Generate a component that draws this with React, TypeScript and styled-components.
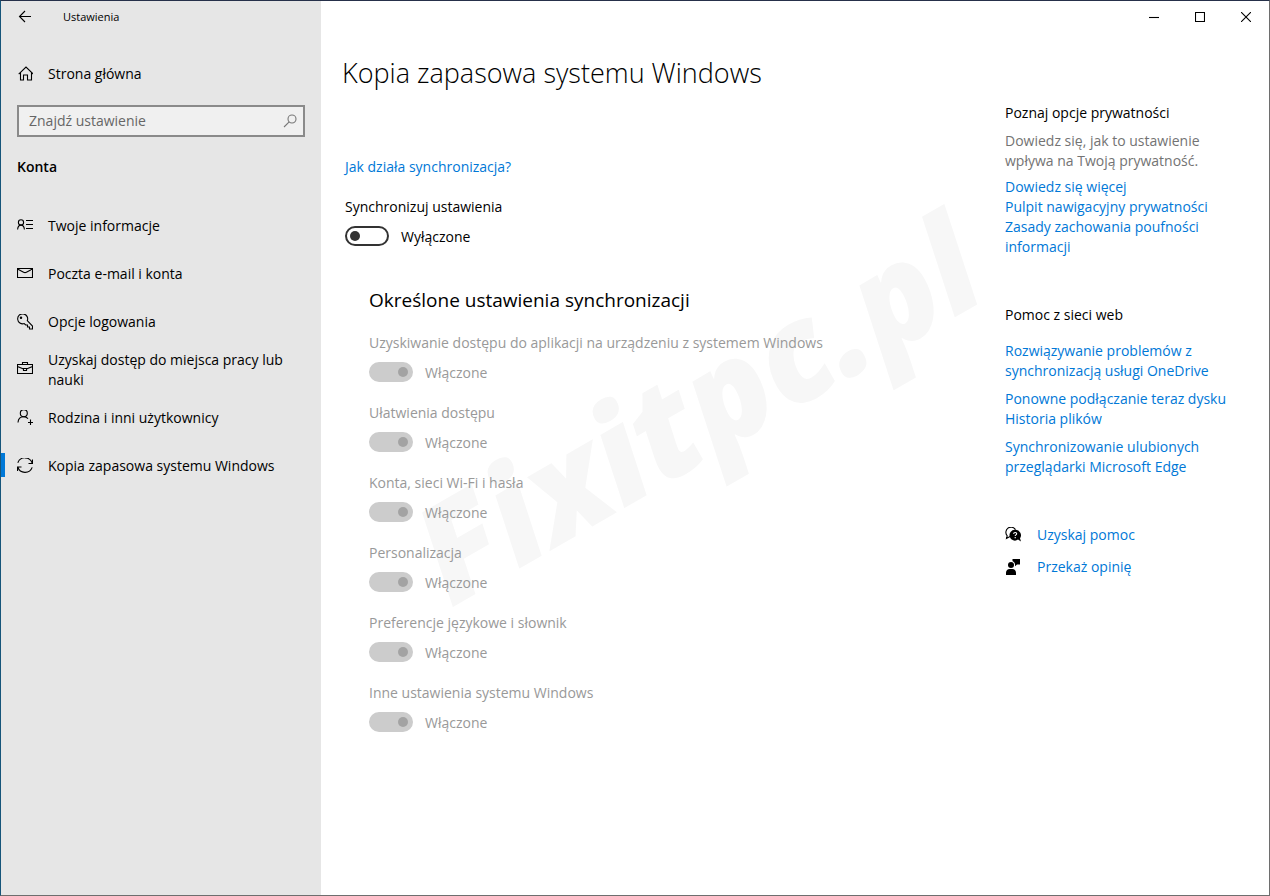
import React from "react";
import styled, { createGlobalStyle } from "styled-components";

const GlobalStyle = createGlobalStyle`
  * { box-sizing: border-box; }
  body {
    margin: 0;
    font-family: "Open Sans", "Noto Sans", sans-serif;
    font-size: 14px;
    line-height: 20px;
    color: #000;
    background: #fff;
  }
  button, input { font: inherit; color: inherit; }
`;

const AppWindow = styled.div`
  display: flex;
  min-height: 100vh;
  border: 1px solid;
  border-color: #26304a #6e6e6e #6e6e6e #16557a;
  overflow: hidden;
`;

const Sidebar = styled.aside`
  flex: 0 0 320px;
  background: #e6e6e6;
`;

const TitleBar = styled.header<{ $end?: boolean }>`
  display: flex;
  align-items: center;
  justify-content: ${(p) => (p.$end ? "flex-end" : "flex-start")};
  height: 32px;
  font-size: 11px;
`;

const BackButton = styled.button`
  display: flex;
  align-items: center;
  width: 48px;
  height: 32px;
  margin-right: 14px;
  padding: 0 0 0 16px;
  border: 0;
  background: none;
`;

const CaptionButton = styled.button`
  display: flex;
  align-items: center;
  justify-content: center;
  width: 46px;
  height: 32px;
  padding: 0;
  border: 0;
  background: none;
`;

const NavLink = styled.a<{ $active?: boolean }>`
  display: flex;
  align-items: center;
  gap: 15px;
  min-height: 48px;
  padding: 0 16px 0 12px;
  border-left: 4px solid transparent;
  color: #000;
  text-decoration: none;
  position: relative;

  &::before {
    content: "";
    display: ${(p) => (p.$active ? "block" : "none")};
    position: absolute;
    left: -4px;
    top: 11px;
    width: 4px;
    height: 24px;
    background: #0078d7;
  }
`;

const HomeLink = styled(NavLink)`
  height: 50px;
  margin-top: 16px;
`;

const SearchBox = styled.label`
  display: flex;
  align-items: center;
  height: 32px;
  margin: 6px 16px 20px;
  padding: 0 5px 0 10px;
  border: 2px solid #8a8a8a;
  background: #f0f0f0;
`;

const SearchInput = styled.input`
  flex: 1;
  min-width: 0;
  padding: 0;
  border: 0;
  outline: 0;
  background: none;

  &::placeholder { color: #666; opacity: 1; }
`;

const Category = styled.h2`
  margin: 0 16px 25px;
  font-size: 14px;
  line-height: 20px;
  font-weight: 600;
`;

const Main = styled.main`
  flex: 1;
  min-width: 0;
  position: relative;
`;

const Watermark = styled.div`
  position: absolute;
  left: 104px;
  top: 562px;
  height: 0;
  line-height: 0;
  font-size: 136px;
  font-weight: 800;
  font-style: italic;
  color: #f7f7f7;
  white-space: nowrap;
  transform: rotate(-30deg);
  transform-origin: 0 0;
  pointer-events: none;
`;

const Body = styled.div`
  display: flex;
  position: relative;
  padding: 22px 24px 24px;
`;

const Content = styled.section`
  flex: 1;
  min-width: 0;
`;

const PageTitle = styled.h1`
  margin: 0 0 66px -3px;
  font-size: 27px;
  line-height: 36px;
  font-weight: 300;
`;

const Link = styled.a`
  display: block;
  color: #0078d7;
  text-decoration: none;
`;

const Setting = styled.label`
  display: block;
  margin-top: 20px;
`;

const SettingRow = styled.span<{ $disabled?: boolean }>`
  display: block;
  color: ${(p) => (p.$disabled ? "#999" : "#000")};
`;

const SwitchLine = styled.span`
  display: flex;
  align-items: flex-start;
  gap: 12px;
  height: 21px;
  margin-top: 9px;
  line-height: 22px;
`;

const Switch = styled.input`
  appearance: none;
  display: flex;
  align-items: center;
  width: 44px;
  height: 20px;
  margin: 0;
  padding: 0 3px;
  border: 2px solid #333;
  border-radius: 10px;
  background: #fff;

  &::before {
    content: "";
    width: 10px;
    height: 10px;
    border-radius: 50%;
    background: #333;
  }
  &:checked { justify-content: flex-end; }
  &:disabled { border-color: #ccc; background: #ccc; }
  &:disabled::before { background: #a3a3a3; }
`;

const SyncGroup = styled.section`
  margin: 39px 0 0 24px;
`;

const GroupTitle = styled.h2`
  margin: 0 0 19px;
  font-size: 19px;
  line-height: 28px;
  font-weight: 400;
`;

const GroupList = styled.div`
  display: grid;
  gap: 20px;

  ${Setting} { margin-top: 0; }
`;

const Related = styled.aside`
  flex: 0 0 240px;
  padding-top: 48px;
`;

const RelatedTitle = styled.h3`
  margin: 0;
  font-size: 14px;
  line-height: 20px;
  font-weight: 400;
`;

const Note = styled.p`
  margin: 8px 0 6px;
  color: #737373;
`;

const LinkStack = styled.div<{ $gap?: number }>`
  display: grid;
  gap: ${(p) => p.$gap ?? 0}px;
  padding-right: 16px;
`;

const HelpSection = styled.section`
  margin: 48px 0 42px;

  ${RelatedTitle} { margin-bottom: 16px; }
  ${LinkStack} { padding-right: 0; }
`;

const ActionLink = styled(Link)`
  display: flex;
  align-items: center;
  gap: 16px;
  height: 32px;

  svg { color: #000; }
`;

const IconSvg = styled.svg`
  flex-shrink: 0;
`;

const Svg = ({ children, size = 16 }: { children: React.ReactNode; size?: number }) => (
  <IconSvg
    width={size}
    height={size}
    viewBox={`0 0 ${size} ${size}`}
    fill="none"
    stroke="currentColor"
    strokeWidth="1.1"
    aria-hidden="true"
  >
    {children}
  </IconSvg>
);

const BackIcon = () => <Svg><path d="M14 7.5H2.5M8 2L2.5 7.5L8 13" /></Svg>;
const HomeIcon = () => (
  <Svg><path d="M1.7 8.6L9 1.5l7.3 7.1M3.5 7v7.5h3V9.5h4v5h4V7" transform="translate(0 -.5)" /></Svg>
);
const SearchIcon = () => (
  <Svg><g stroke="#777"><circle cx="10" cy="6" r="4" /><path d="M7.2 8.8L2 14" /></g></Svg>
);
const InfoIcon = () => (
  <Svg><circle cx="4" cy="4.4" r="2.6" /><path d="M.6 11.5C.8 8.6 2.2 7.1 4 7.1s3.2 1.5 3.4 4.4M9 2.5h7M9 6.5h7M9 10.5h7" /></Svg>
);
const MailIcon = () => (
  <Svg><path d="M.5 2.5h15v9H.5zM.5 3L6.6 6.3a3 3 0 0 0 2.8 0L15.5 3" /></Svg>
);
const KeyIcon = () => (
  <Svg>
    <path d="M10.3 7.2A5 5 0 1 0 7.2 10.1L8.7 11.5H10.5V13.5H12.5V15.5H15.5V12.6L10.3 7.2Z" transform="translate(0 -.5)" />
    <circle cx="4" cy="3.8" r=".7" />
  </Svg>
);
const BriefcaseIcon = () => (
  <Svg><path d="M.5 2.5h15v9H.5zM5.5 2.5v-2h5v2M.5 4.5L6.5 7M9.5 7l6-2.5M6.5 6.5h3v2h-3z" /></Svg>
);
const FamilyIcon = () => (
  <Svg><circle cx="6.8" cy="3.2" r="3.5" /><path d="M1 12.5C1.2 9 3.6 6.7 6.8 6.7c1.7 0 3.2.7 4.2 1.9M13.5 9.5v5.5M11 12.5h5" /></Svg>
);
const SyncIcon = () => (
  <Svg><path d="M.8 4.8A7.6 7.6 0 0 1 15.2 5.2M15.2 9.4A7.6 7.6 0 0 1 .8 9M15.5 1.5V5.5H11.5M.5 13V9H4.5" /></Svg>
);
const HelpIcon = () => (
  <Svg>
    <path d="M5 9.5L1.5 11.5L2.2 8.8A5.2 5.2 0 1 1 10.5 2.6" />
    <path d="M10 2.8a5.4 5.4 0 1 0 3 9.8l3 1.9-1-3.3A5.4 5.4 0 0 0 10 2.8Z" fill="currentColor" stroke="none" />
    <path d="M8.6 6.9c.1-2 3.4-1.8 3 .1-.2 1-1.4.9-1.4 2.1M10.2 10v1.2" stroke="#fff" />
  </Svg>
);
const FeedbackIcon = () => (
  <Svg>
    <g fill="currentColor" stroke="none">
      <circle cx="6" cy="6" r="3" />
      <path d="M1 16v-2.2C1 11.5 2.6 10 4.6 10h2.8C9.4 10 11 11.5 11 13.8V16ZM7.5 0H15v5.5h-3L10 7.2V5a4 4 0 0 0-2.5-3Z" />
    </g>
  </Svg>
);

const navItems = [
  { label: "Twoje informacje", icon: <InfoIcon /> },
  { label: "Poczta e-mail i konta", icon: <MailIcon /> },
  { label: "Opcje logowania", icon: <KeyIcon /> },
  { label: "Uzyskaj dostęp do miejsca pracy lub nauki", icon: <BriefcaseIcon /> },
  { label: "Rodzina i inni użytkownicy", icon: <FamilyIcon /> },
  { label: "Kopia zapasowa systemu Windows", icon: <SyncIcon />, active: true },
];

const syncOptions = [
  "Uzyskiwanie dostępu do aplikacji na urządzeniu z systemem Windows",
  "Ułatwienia dostępu",
  "Konta, sieci Wi-Fi i hasła",
  "Personalizacja",
  "Preferencje językowe i słownik",
  "Inne ustawienia systemu Windows",
];

function ToggleSetting({ label, on, disabled }: { label: string; on?: boolean; disabled?: boolean }) {
  return (
    <Setting>
      <SettingRow $disabled={disabled}>
        {label}
        <SwitchLine>
          <Switch type="checkbox" role="switch" defaultChecked={on} disabled={disabled} />
          {on ? "Włączone" : "Wyłączone"}
        </SwitchLine>
      </SettingRow>
    </Setting>
  );
}

export default function App() {
  return (
    <>
      <GlobalStyle />
      <AppWindow>
        <Sidebar>
          <TitleBar>
            <BackButton aria-label="Wstecz"><BackIcon /></BackButton>
            Ustawienia
          </TitleBar>
          <HomeLink href="#"><HomeIcon />Strona główna</HomeLink>
          <SearchBox>
            <SearchInput type="text" placeholder="Znajdź ustawienie" aria-label="Znajdź ustawienie" />
            <SearchIcon />
          </SearchBox>
          <Category>Konta</Category>
          <nav>
            {navItems.map((item) => (
              <NavLink key={item.label} href="#" $active={item.active}>
                {item.icon}
                <span>{item.label}</span>
              </NavLink>
            ))}
          </nav>
        </Sidebar>
        <Main>
          <Watermark aria-hidden="true">Fixitpc.pl</Watermark>
          <TitleBar $end>
            <CaptionButton aria-label="Minimalizuj"><Svg size={10}><path d="M0 5.5h10" /></Svg></CaptionButton>
            <CaptionButton aria-label="Maksymalizuj"><Svg size={10}><path d="M.5.5h9v9h-9z" /></Svg></CaptionButton>
            <CaptionButton aria-label="Zamknij"><Svg size={10}><path d="M0 0l10 10M10 0L0 10" /></Svg></CaptionButton>
          </TitleBar>
          <Body>
            <Content>
              <PageTitle>Kopia zapasowa systemu Windows</PageTitle>
              <Link href="#">Jak działa synchronizacja?</Link>
              <ToggleSetting label="Synchronizuj ustawienia" />
              <SyncGroup>
                <GroupTitle>Określone ustawienia synchronizacji</GroupTitle>
                <GroupList>
                  {syncOptions.map((label) => (
                    <ToggleSetting key={label} label={label} on disabled />
                  ))}
                </GroupList>
              </SyncGroup>
            </Content>
            <Related>
              <RelatedTitle>Poznaj opcje prywatności</RelatedTitle>
              <Note>Dowiedz się, jak to ustawienie wpływa na Twoją prywatność.</Note>
              <LinkStack>
                <Link href="#">Dowiedz się więcej</Link>
                <Link href="#">Pulpit nawigacyjny prywatności</Link>
                <Link href="#">Zasady zachowania poufności informacji</Link>
              </LinkStack>
              <HelpSection>
                <RelatedTitle>Pomoc z sieci web</RelatedTitle>
                <LinkStack $gap={8}>
                  <Link href="#">Rozwiązywanie problemów z synchronizacją usługi OneDrive</Link>
                  <Link href="#">Ponowne podłączanie teraz dysku Historia plików</Link>
                  <Link href="#">Synchronizowanie ulubionych przeglądarki Microsoft Edge</Link>
                </LinkStack>
              </HelpSection>
              <ActionLink href="#"><HelpIcon />Uzyskaj pomoc</ActionLink>
              <ActionLink href="#"><FeedbackIcon />Przekaż opinię</ActionLink>
            </Related>
          </Body>
        </Main>
      </AppWindow>
    </>
  );
}
